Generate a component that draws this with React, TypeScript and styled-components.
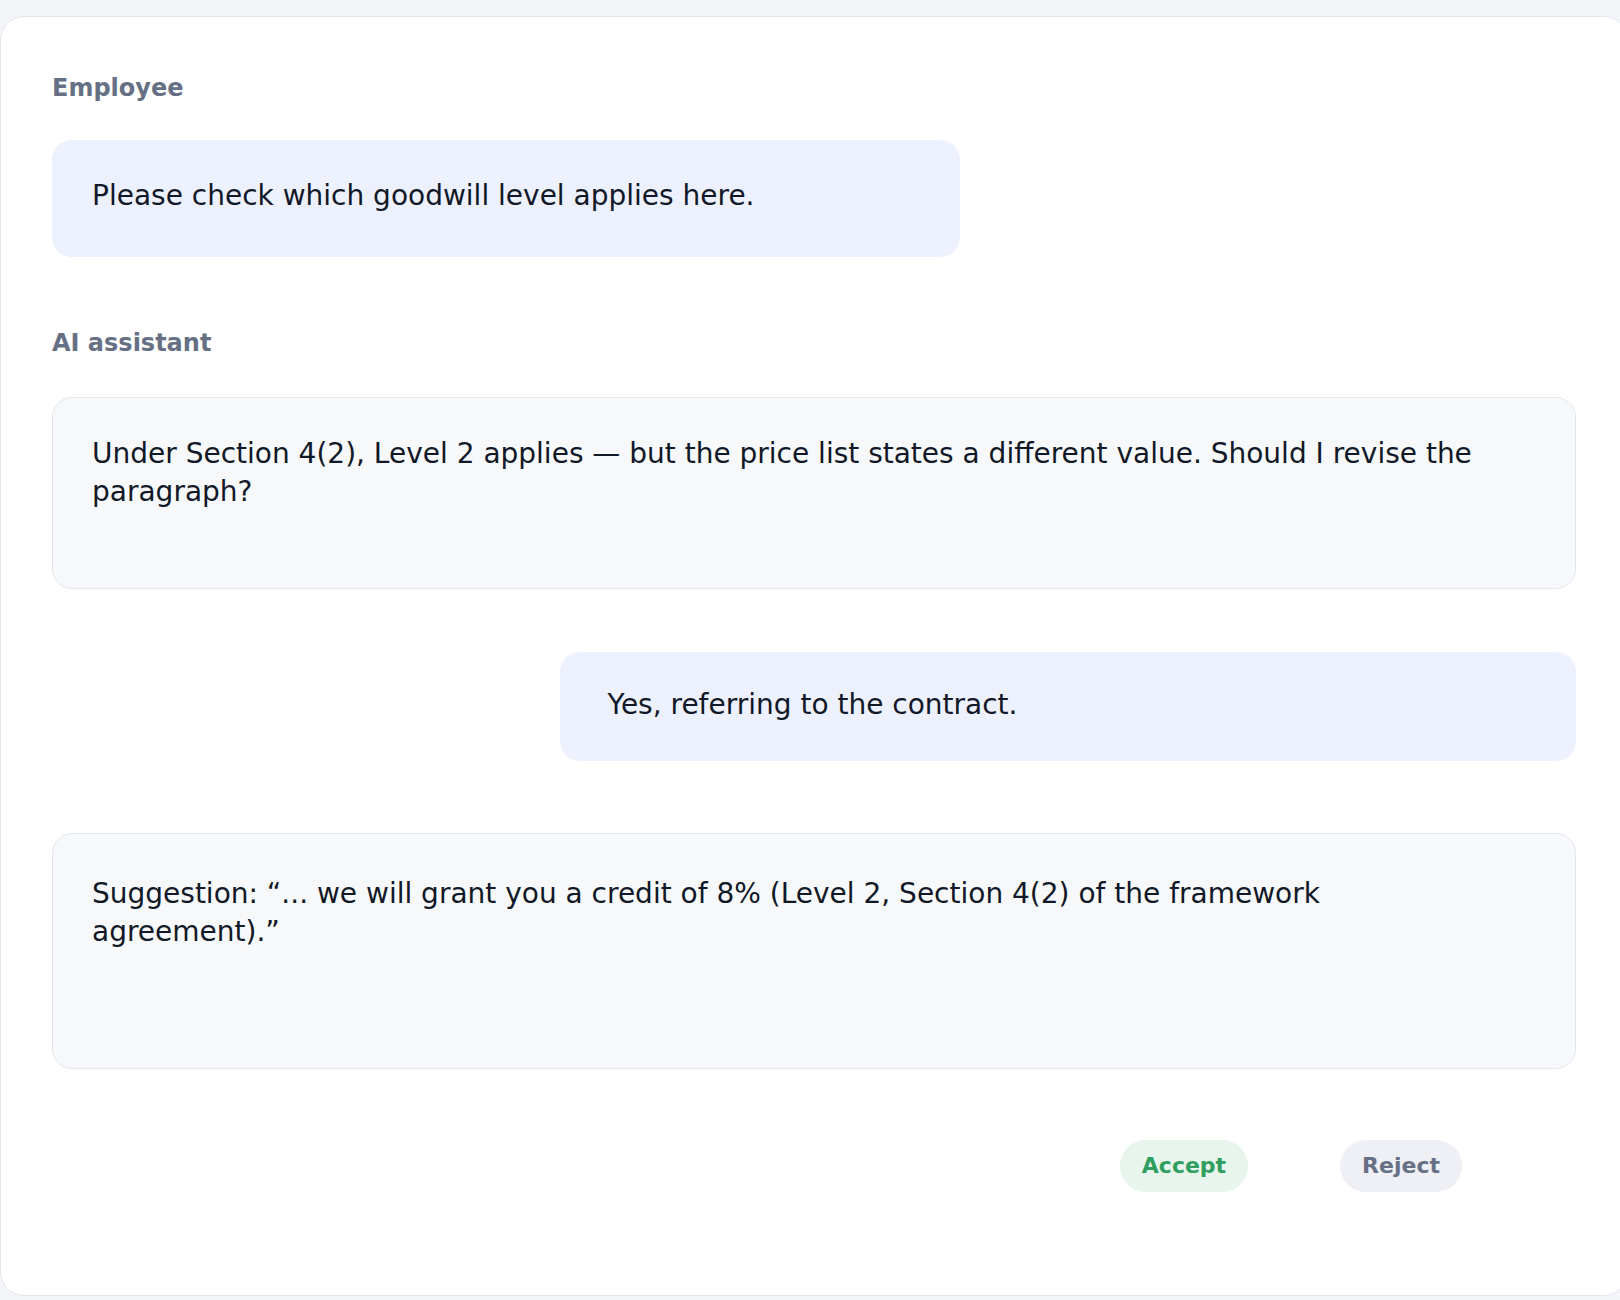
import styled, { createGlobalStyle } from 'styled-components';

const GlobalStyle = createGlobalStyle`
  html, body {
    margin: 0;
    padding: 0;
    overflow: hidden;
    background: #f4f5f9;
    font-family: "DejaVu Sans", "Noto Sans", sans-serif;
    color: #111827;
  }
`

type Bubble = {
  from: 'user' | 'assistant';
  text: string;
  width?: string;
  minHeight: number;
  padTop: number;
  padLeft: number;
  gap: number;
  alignEnd?: boolean;
}

const thread: { label?: string; gap: number; bubbles: Bubble[] }[] = [
  {
    label: 'Employee',
    gap: 0,
    bubbles: [
      {
        from: 'user',
        text: 'Please check which goodwill level applies here.',
        width: '59.6%',
        minHeight: 117,
        padTop: 37,
        padLeft: 40,
        gap: 37,
      },
    ],
  },
  {
    label: 'AI assistant',
    gap: 72,
    bubbles: [
      {
        from: 'assistant',
        text: 'Under Section 4(2), Level 2 applies — but the price list states a different value. Should I revise the paragraph?',
        minHeight: 192,
        padTop: 37,
        padLeft: 39,
        gap: 39,
      },
      {
        from: 'user',
        text: 'Yes, referring to the contract.',
        width: '66.7%',
        minHeight: 109,
        padTop: 34,
        padLeft: 48,
        gap: 63,
        alignEnd: true,
      },
      {
        from: 'assistant',
        text: 'Suggestion: “... we will grant you a credit of 8% (Level 2, Section 4(2) of the framework agreement).”',
        minHeight: 236,
        padTop: 41,
        padLeft: 39,
        gap: 72,
      },
    ],
  },
]

export default function App() {
  return (
    <>
      <GlobalStyle />
      <Page>
        <Card>
          {thread.map((group, i) => (
            <Group key={i} $gap={group.gap}>
              {group.label && <Label>{group.label}</Label>}
              {group.bubbles.map((b, j) => (
                <Message
                  key={j}
                  $from={b.from}
                  $width={b.width}
                  $minHeight={b.minHeight}
                  $padTop={b.padTop}
                  $padLeft={b.padLeft}
                  $gap={b.gap}
                  $alignEnd={b.alignEnd}
                >
                  {b.text}
                </Message>
              ))}
            </Group>
          ))}

          <Actions>
            <Pill $kind="accept">Accept</Pill>
            <Pill $kind="reject">Reject</Pill>
          </Actions>
        </Card>
      </Page>
    </>
  )
}

const Page = styled.div`
  padding-top: 16px;
  width: 1620px;
  height: 1300px;
  box-sizing: border-box;
`

const Card = styled.div`
  width: 1628px;
  height: 1280px;
  box-sizing: border-box;
  background: #ffffff;
  border: 1px solid #e3e6ee;
  border-radius: 24px;
  padding: 57px 51px 0;
  display: flex;
  flex-direction: column;
`

const Group = styled.section<{ $gap: number }>`
  display: flex;
  flex-direction: column;
  margin-top: ${p => p.$gap}px;
`

const Label = styled.div`
  font-size: 24px;
  line-height: 28.8px;
  font-weight: 700;
  color: #667085;
`

const Message = styled.div<{
  $from: 'user' | 'assistant';
  $width?: string;
  $minHeight: number;
  $padTop: number;
  $padLeft: number;
  $gap: number;
  $alignEnd?: boolean;
}>`
  box-sizing: border-box;
  margin-top: ${p => p.$gap}px;
  width: ${p => p.$width ?? '100%'};
  align-self: ${p => (p.$alignEnd ? 'flex-end' : 'flex-start')};
  min-height: ${p => p.$minHeight}px;
  padding: ${p => p.$padTop}px ${p => (p.$from === 'user' ? 40 : 80)}px 20px ${p => p.$padLeft}px;
  font-size: 28px;
  line-height: 38.5px;
  border-radius: 20px;
  background: ${p => (p.$from === 'user' ? '#edf1fd' : '#f7f8fa')};
  border: ${p => (p.$from === 'user' ? 'none' : '1px solid #e2e6ee')};
`

const Actions = styled.div`
  display: flex;
  justify-content: flex-end;
  gap: 92px;
  padding-right: 114px;
  margin-top: 71px;
`

const Pill = styled.button<{ $kind: 'accept' | 'reject' }>`
  height: 52px;
  padding: 0 22px;
  border: none;
  border-radius: 26px;
  font-family: "DejaVu Sans", "Noto Sans", sans-serif;
  font-size: 22px;
  font-weight: 700;
  cursor: pointer;
  background: ${p => (p.$kind === 'accept' ? '#e7f5ec' : '#eff0f5')};
  color: ${p => (p.$kind === 'accept' ? '#2f9e5f' : '#667085')};
`
